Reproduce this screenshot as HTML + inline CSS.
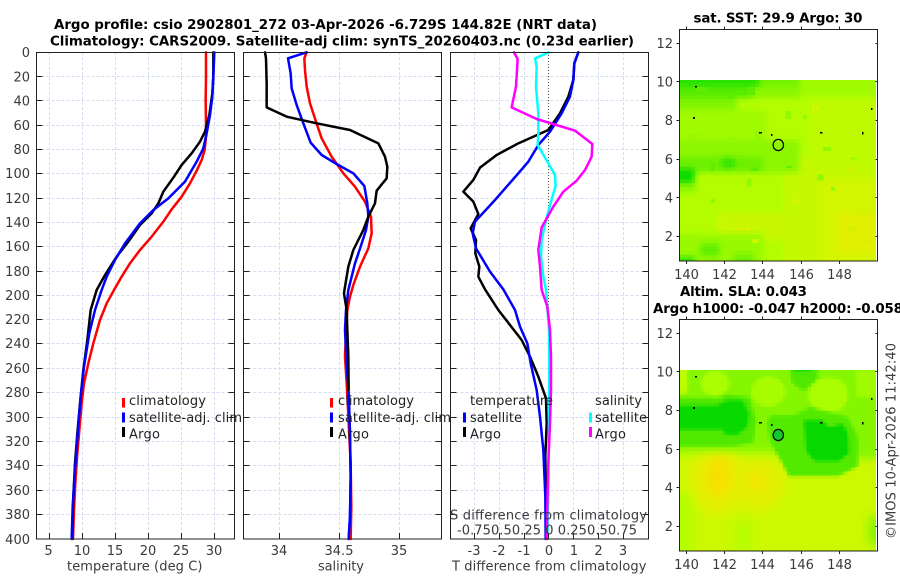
<!DOCTYPE html>
<html><head><meta charset="utf-8"><style>
html,body{margin:0;padding:0;background:#fff;width:900px;height:580px;overflow:hidden}
svg{display:block}
text{font-family:"DejaVu Sans","Liberation Sans",sans-serif;font-size:13px;fill:#3a3a3a}
.t{font-weight:bold;fill:#000;font-size:13.4px}
.yl{text-anchor:end}.xl{text-anchor:middle}
.l{fill:#222}
.c{fill:none;stroke-width:7.5;stroke-linejoin:round;stroke-linecap:round}
.g{fill:none;stroke:#d6dcf2;stroke-width:1;stroke-dasharray:3 2}
.k{fill:none;stroke:#222;stroke-width:1}
</style></head><body>
<svg width="900" height="580" viewBox="0 0 900 580" xmlns="http://www.w3.org/2000/svg">
<defs>
<path id="hg" class="g" d="M0 76.5H198M0 100.5H198M0 125.5H198M0 149.5H198M0 173.5H198M0 198.5H198M0 222.5H198M0 246.5H198M0 271.5H198M0 295.5H198M0 319.5H198M0 343.5H198M0 368.5H198M0 392.5H198M0 417.5H198M0 441.5H198M0 465.5H198M0 490.5H198M0 514.5H198"/>
<path id="ht" class="k" d="M0 76.5h6M0 100.5h6M0 125.5h6M0 149.5h6M0 173.5h6M0 198.5h6M0 222.5h6M0 246.5h6M0 271.5h6M0 295.5h6M0 319.5h6M0 343.5h6M0 368.5h6M0 392.5h6M0 417.5h6M0 441.5h6M0 465.5h6M0 490.5h6M0 514.5h6M198 76.5h-6M198 100.5h-6M198 125.5h-6M198 149.5h-6M198 173.5h-6M198 198.5h-6M198 222.5h-6M198 246.5h-6M198 271.5h-6M198 295.5h-6M198 319.5h-6M198 343.5h-6M198 368.5h-6M198 392.5h-6M198 417.5h-6M198 441.5h-6M198 465.5h-6M198 490.5h-6M198 514.5h-6"/>
<clipPath id="c1"><rect x="680" y="80" width="196" height="181"/></clipPath>
<clipPath id="c2"><rect x="680" y="370" width="196" height="181"/></clipPath>
<filter id="b1" filterUnits="userSpaceOnUse" x="640" y="60" width="260" height="520" color-interpolation-filters="sRGB"><feGaussianBlur stdDeviation="3"/></filter>
<filter id="b2" filterUnits="userSpaceOnUse" x="640" y="340" width="260" height="240" color-interpolation-filters="sRGB"><feGaussianBlur stdDeviation="1.2"/></filter>
<filter id="b3" filterUnits="userSpaceOnUse" x="640" y="340" width="260" height="240" color-interpolation-filters="sRGB"><feGaussianBlur stdDeviation="5"/></filter>
<filter id="b4" filterUnits="userSpaceOnUse" x="640" y="340" width="260" height="240" color-interpolation-filters="sRGB"><feGaussianBlur stdDeviation="4"/></filter>
<filter id="px" filterUnits="userSpaceOnUse" x="676" y="76" width="204" height="480" color-interpolation-filters="sRGB">
<feFlood x="676" y="76" width="2" height="2" flood-color="#000" result="f"/>
<feComposite in="f" in2="f" operator="over" x="676" y="76" width="4" height="4" result="c"/>
<feTile in="c" x="676" y="76" width="204" height="480" result="t"/>
<feComposite in="SourceGraphic" in2="t" operator="in" x="676" y="76" width="204" height="480" result="s"/>
<feMorphology in="s" operator="dilate" radius="1"/>
</filter>
</defs>

<!-- titles -->
<text class="t" x="54" y="29" textLength="543">Argo profile: csio 2902801_272 03-Apr-2026 -6.729S 144.82E (NRT data)</text>
<text class="t" x="50" y="45.7" textLength="584">Climatology: CARS2009. Satellite-adj clim: synTS_20260403.nc (0.23d earlier)</text>

<!-- grids -->
<use href="#hg" x="36.5"/><use href="#hg" x="243.5"/><use href="#hg" x="450.5"/>
<path class="g" d="M49.5 52V539M82.5 52V539M115.5 52V539M148.5 52V539M181.5 52V539M214.5 52V539M279.5 52V539M339.5 52V539M399.5 52V539M474.5 52V539M499.5 52V539M524.5 52V539M573.5 52V539M598.5 52V539M623.5 52V539"/>
<path d="M548.5 52V539" fill="none" stroke="#555533" stroke-width="1" stroke-dasharray="1 2"/>

<!-- curves -->
<g transform="scale(.33333)">
<polyline class="c" stroke="#f00" points="618,157 618,230 617,300 618,376 618,410 614,450 605,480 590,512 570,550 545,590 515,628 490,665 455,710 420,750 390,790 365,830 342,870 320,910 300,960 280,1030 265,1090 252,1150 245,1210 238,1290 232,1360 226,1450 222,1530 219,1617"/>
<polyline class="c" stroke="#000" points="640,157 640,230 637,280 628,345 615,395 600,425 575,460 545,495 522,530 490,575 475,610 455,640 420,675 385,725 350,770 315,825 290,870 272,930 262,1020 250,1110 240,1210 232,1300 225,1390 220,1490 216,1617"/>
<polyline class="c" stroke="#00f" points="643,157 640,230 637,290 630,345 620,400 610,445 590,485 555,545 505,595 460,630 420,670 375,730 345,780 320,830 305,870 285,930 268,1000 252,1100 242,1190 234,1290 225,1410 218,1520 215,1617"/>

<polyline class="c" stroke="#f00" points="920,157 913,175 915,210 920,260 930,310 948,365 965,415 995,470 1030,520 1065,560 1095,605 1113,650 1115,700 1105,745 1080,800 1060,855 1050,890 1042,930 1038,990 1035,1070 1040,1150 1046,1270 1052,1390 1054,1520 1052,1617"/>
<polyline class="c" stroke="#00f" points="920,157 864,175 872,220 875,265 890,315 910,370 932,428 965,465 1015,495 1060,520 1093,558 1102,610 1105,650 1098,690 1082,740 1065,790 1050,850 1045,870 1038,930 1035,990 1040,1090 1046,1180 1050,1300 1052,1430 1050,1550 1046,1617"/>
<polyline class="c" stroke="#000" points="795,157 798,175 800,250 800,322 860,350 950,370 1050,390 1135,430 1155,470 1162,500 1160,535 1130,572 1125,610 1105,650 1090,690 1060,750 1045,800 1035,860 1032,880 1040,930 1042,990 1045,1070 1046,1170"/>
<polyline class="c" stroke="#00f" points="1046,1180 1050,1300 1052,1430 1050,1550 1046,1617"/>

<g transform="translate(1320 0)">
<polyline class="c" stroke="#000" points="415,157 403,190 400,240 385,290 360,340 325,390 235,430 170,465 120,503 100,540 70,575 100,605 115,642 92,685 108,720 106,760 118,800 115,830 135,868 175,930 245,1020 270,1070 295,1130 318,1195 320,1270 316,1370 318,1490 322,1617"/>
<polyline class="c" stroke="#00f" points="415,157 403,190 400,240 390,290 365,340 330,395 295,435 265,485 235,520 165,600 105,665 98,700 108,745 150,815 190,868 225,930 240,980 262,1030 272,1090 290,1170 300,1250 310,1350 316,1490 317,1617"/>
<polyline class="c" stroke="#0ff" points="326,157 285,175 290,200 288,260 295,340 295,400 293,435 325,490 345,525 347,557 330,615 318,660 305,720 303,770 310,830 318,870 322,920 327,990 328,1120 327,1270 324,1520 322,1617"/>
<polyline class="c" stroke="#f0f" points="222,157 233,177 228,260 215,322 290,357 405,392 457,432 455,470 435,510 410,542 370,575 340,620 305,682 295,750 300,800 305,870 322,920 330,990 333,1070 333,1170 330,1270 325,1390 322,1520 320,1617"/>
</g>
</g>

<!-- frames and ticks -->
<rect class="k" x="36.5" y="52.5" width="198" height="486.5"/>
<rect class="k" x="243.5" y="52.5" width="198" height="486.5"/>
<rect class="k" x="450.5" y="52.5" width="198" height="486.5"/>
<use href="#ht" x="36.5"/><use href="#ht" x="243.5"/><use href="#ht" x="450.5"/>
<path class="k" d="M49.5 539v-6M82.5 539v-6M115.5 539v-6M148.5 539v-6M181.5 539v-6M214.5 539v-6M279.5 539v-6M339.5 539v-6M399.5 539v-6M474.5 539v-6M499.5 539v-6M524.5 539v-6M548.5 539v-6M573.5 539v-6M598.5 539v-6M623.5 539v-6"/>

<!-- y labels -->
<text class="yl" x="30" y="57">0</text><text class="yl" x="30" y="81.5">20</text><text class="yl" x="30" y="105.5">40</text><text class="yl" x="30" y="130">60</text><text class="yl" x="30" y="154">80</text><text class="yl" x="30" y="178">100</text><text class="yl" x="30" y="203">120</text><text class="yl" x="30" y="227">140</text><text class="yl" x="30" y="251">160</text><text class="yl" x="30" y="276">180</text><text class="yl" x="30" y="300">200</text><text class="yl" x="30" y="324">220</text><text class="yl" x="30" y="348">240</text><text class="yl" x="30" y="373">260</text><text class="yl" x="30" y="397">280</text><text class="yl" x="30" y="422">300</text><text class="yl" x="30" y="446">320</text><text class="yl" x="30" y="470">340</text><text class="yl" x="30" y="495">360</text><text class="yl" x="30" y="519">380</text><text class="yl" x="30" y="544">400</text>

<!-- x labels -->
<text class="xl" x="48.5" y="555">5</text><text class="xl" x="82" y="555">10</text><text class="xl" x="115" y="555">15</text><text class="xl" x="148" y="555">20</text><text class="xl" x="181" y="555">25</text><text class="xl" x="214" y="555">30</text>
<text class="xl" x="279" y="555">34</text><text class="xl" x="339" y="555">34.5</text><text class="xl" x="399" y="555">35</text>
<text class="xl" x="474" y="555">-3</text><text class="xl" x="499" y="555">-2</text><text class="xl" x="524" y="555">-1</text><text class="xl" x="549" y="555">0</text><text class="xl" x="574" y="555">1</text><text class="xl" x="598.5" y="555">2</text><text class="xl" x="623" y="555">3</text>
<text x="67" y="570.5" textLength="135.5">temperature (deg C)</text>
<text x="318" y="570.5" textLength="46">salinity</text>
<text x="452" y="570.5" textLength="194.5">T difference from climatology</text>
<text x="450" y="519.5" textLength="197">S difference from climatology</text>
<text x="457" y="534.5" textLength="180">-0.750.50.25 0  0.250.50.75</text>

<!-- legends -->
<g stroke-width="3" fill="none">
<path stroke="#f00" d="M123.5 398v9.5"/><path stroke="#00f" d="M123.5 412.5v10"/><path stroke="#000" d="M123.5 427v10"/>
<path stroke="#f00" d="M331.5 398v9.5"/><path stroke="#00f" d="M331.5 412.5v10"/><path stroke="#000" d="M331.5 427v10"/>
<path stroke="#00f" d="M464.5 412.5v10"/><path stroke="#000" d="M464.5 427v10"/>
<path stroke="#0ff" d="M590.5 412.5v10"/><path stroke="#f0f" d="M590.5 427v10"/>
</g>
<text class="l" x="129" y="405" textLength="77">climatology</text>
<text class="l" x="129" y="422" textLength="113">satellite-adj. clim</text>
<text class="l" x="129" y="438.5" textLength="31">Argo</text>
<text class="l" x="338" y="405" textLength="76">climatology</text>
<text class="l" x="338" y="422" textLength="113">satellite-adj. clim</text>
<text class="l" x="338" y="438.5" textLength="31">Argo</text>
<text class="l" x="470" y="405" textLength="83">temperature</text>
<text class="l" x="470" y="422" textLength="52">satellite</text>
<text class="l" x="470" y="438.5" textLength="31">Argo</text>
<text class="l" x="595" y="405" textLength="47">salinity</text>
<text class="l" x="595" y="422" textLength="52">satellite</text>
<text class="l" x="595" y="438.5" textLength="31">Argo</text>

<!-- map 1 -->
<text class="t" x="693.5" y="22.5" textLength="169">sat. SST: 29.9 Argo: 30</text>
<g clip-path="url(#c1)"><g filter="url(#px)">
<g filter="url(#b1)"><g transform="translate(650 0) scale(.33333)">
<rect x="40" y="190" width="690" height="640" fill="#b4fd00"/>
<rect x="400" y="470" width="330" height="360" fill="#c4f900"/>
<rect x="480" y="300" width="250" height="200" fill="#bffb00"/>
<rect x="510" y="540" width="220" height="290" fill="#d2f500"/>
<rect x="560" y="640" width="170" height="120" fill="#e0f000"/>
<rect x="200" y="640" width="200" height="80" fill="#c8f800"/>
<rect x="40" y="190" width="290" height="72" fill="#28e400"/>
<rect x="329" y="190" width="121" height="72" fill="#74f200"/>
<rect x="450" y="190" width="280" height="100" fill="#a0fb00"/>
<rect x="40" y="262" width="270" height="34" fill="#58ec00"/>
<rect x="309" y="262" width="141" height="34" fill="#8cf700"/>
<rect x="40" y="296" width="220" height="34" fill="#80f400"/>
<rect x="40" y="330" width="310" height="90" fill="#a0fa00"/>
<rect x="40" y="420" width="410" height="100" fill="#8cf600"/>
<rect x="40" y="470" width="300" height="45" fill="#6cef00"/>
<rect x="40" y="505" width="95" height="45" fill="#0cdc00"/>
<rect x="215" y="472" width="40" height="33" fill="#30e400"/>
<rect x="40" y="550" width="100" height="30" fill="#8cf600"/>
<rect x="40" y="700" width="300" height="130" fill="#98f900"/>
<rect x="150" y="730" width="60" height="40" fill="#60ee00"/>
<rect x="250" y="760" width="60" height="70" fill="#70f000"/>
<rect x="40" y="770" width="95" height="60" fill="#28e400"/>
</g></g>
<g transform="translate(650 0) scale(.33333)" shape-rendering="crispEdges">
<g fill="#90f800"><rect x="404" y="336" width="18" height="18"/><rect x="520" y="440" width="22" height="12"/><rect x="290" y="540" width="18" height="18"/><rect x="460" y="345" width="12" height="12"/><rect x="500" y="520" width="24" height="24"/><rect x="540" y="560" width="12" height="12"/><rect x="230" y="410" width="24" height="12"/><rect x="120" y="400" width="24" height="12"/><rect x="310" y="390" width="24" height="24"/><rect x="180" y="600" width="12" height="12"/><rect x="600" y="470" width="12" height="12"/></g>
<g fill="#60ee00"><rect x="290" y="260" width="24" height="24"/><rect x="230" y="285" width="24" height="12"/><rect x="180" y="490" width="12" height="24"/><rect x="300" y="500" width="24" height="12"/><rect x="405" y="495" width="24" height="12"/><rect x="140" y="262" width="24" height="12"/></g>
<g fill="#d4f200"><rect x="590" y="680" width="24" height="12"/><rect x="650" y="715" width="12" height="12"/><rect x="430" y="600" width="12" height="12"/><rect x="260" y="680" width="36" height="12"/><rect x="310" y="715" width="12" height="12"/><rect x="490" y="320" width="12" height="12"/><rect x="620" y="630" width="36" height="12"/><rect x="590" y="500" width="12" height="12"/></g>
</g>
</g></g>
<rect x="876" y="80" width="1" height="181" fill="#fff"/>
<rect class="k" x="679.5" y="29.5" width="198" height="231.5"/>
<path class="k" d="M679.5 43.5h-3M679.5 81.5h-3M679.5 120.5h-3M679.5 159.5h-3M679.5 197.5h-3M679.5 236.5h-3M877.5 43.5h-2M877.5 81.5h-2M877.5 120.5h-2M877.5 159.5h-2M877.5 197.5h-2M877.5 236.5h-2M686.5 29.5v-3M724.5 29.5v-3M762.5 29.5v-3M801.5 29.5v-3M839.5 29.5v-3M686.5 261v3M724.5 261v3M762.5 261v3M801.5 261v3M839.5 261v3"/>
<g fill="#000"><rect x="695" y="86" width="2" height="1.5"/><rect x="693" y="117" width="2" height="2"/><rect x="759" y="132" width="3" height="1.5"/><rect x="771" y="134" width="1.5" height="2"/><rect x="820" y="132" width="2.5" height="1.5"/><rect x="862" y="132" width="1.5" height="2.5"/><rect x="871" y="108" width="1.5" height="2"/></g>
<ellipse cx="778.3" cy="145" rx="5.2" ry="5.6" fill="none" stroke="#000" stroke-width="1.2"/>
<text class="yl" x="673" y="48">12</text><text class="yl" x="673" y="86.5">10</text><text class="yl" x="673" y="125">8</text><text class="yl" x="673" y="164">6</text><text class="yl" x="673" y="202.5">4</text><text class="yl" x="673" y="241">2</text>
<text class="xl" x="686.5" y="279">140</text><text class="xl" x="724.5" y="279">142</text><text class="xl" x="762.5" y="279">144</text><text class="xl" x="801.5" y="279">146</text><text class="xl" x="839.5" y="279">148</text>

<!-- map 2 -->
<text class="t" x="680" y="296" textLength="127">Altim. SLA: 0.043</text>
<text class="t" x="653" y="313" textLength="250">Argo h1000: -0.047 h2000: -0.058</text>
<g clip-path="url(#c2)"><g filter="url(#px)">
<g filter="url(#b3)"><g transform="translate(650 280) scale(.33333)">
<rect x="40" y="220" width="690" height="640" fill="#b8fc00"/>
<rect x="40" y="530" width="690" height="320" fill="#ccf800"/>
<rect x="40" y="640" width="90" height="210" fill="#b4fd00"/>
<rect x="250" y="720" width="55" height="130" fill="#b8fc00"/>
<rect x="655" y="710" width="70" height="85" fill="#84f500"/>
<ellipse cx="205" cy="600" rx="90" ry="105" fill="#e2f000"/>
<ellipse cx="325" cy="610" rx="78" ry="80" fill="#e2f000"/>
<ellipse cx="205" cy="590" rx="42" ry="60" fill="#f6e000"/>
<ellipse cx="320" cy="605" rx="32" ry="32" fill="#f0e600"/>
</g></g>
<g filter="url(#b4)"><g transform="translate(650 280) scale(.33333)">
<path d="M40 190H730V535H600L540 565L450 560L390 515H40Z" fill="#86f600"/>
</g></g>
<g filter="url(#b2)"><g transform="translate(650 280) scale(.33333)">
<rect x="40" y="220" width="72" height="120" fill="#bcfc00"/>
<ellipse cx="195" cy="310" rx="42" ry="36" fill="#aafd00"/>
<ellipse cx="355" cy="335" rx="50" ry="44" fill="#a8fc00"/>
<ellipse cx="535" cy="345" rx="58" ry="52" fill="#aafd00"/>
<path d="M620 270h110v80h-110z" fill="#a0fb00"/>
<path d="M40 352H209L229 342L299 350L320 420L310 490L250 500H40Z" fill="#50e800"/>
<path d="M360 405h70l50-25 115 30 30 60v90l-60 30h-150l-25-50-30-50-10-60z" fill="#54ea00"/>
<path d="M410 220h100l-8 80-42 35-35-25z" fill="#50e800"/>
<path d="M428 220h56v56h-56z" fill="#10dc00"/>
<path d="M40 375H199L229 360H279L299 400L294 440L264 465H224L219 450H40Z" fill="#08da00"/>
<path d="M460 420h60l15 20 45-10 15 30 3 60-30 25h-75l-25-30z" fill="#06d800"/>
</g></g>
</g></g>
<rect x="876" y="370" width="1" height="181" fill="#fff"/>
<rect class="k" x="679.5" y="319.5" width="198" height="231.5"/>
<path class="k" d="M679.5 333.5h-3M679.5 371.5h-3M679.5 410.5h-3M679.5 449.5h-3M679.5 487.5h-3M679.5 526.5h-3M877.5 333.5h-2M877.5 371.5h-2M877.5 410.5h-2M877.5 449.5h-2M877.5 487.5h-2M877.5 526.5h-2M686.5 319.5v-3M724.5 319.5v-3M762.5 319.5v-3M801.5 319.5v-3M839.5 319.5v-3M686.5 551v3M724.5 551v3M762.5 551v3M801.5 551v3M839.5 551v3"/>
<g fill="#000"><rect x="695" y="376" width="2" height="1.5"/><rect x="693" y="407" width="2" height="2"/><rect x="759" y="422" width="3" height="1.5"/><rect x="771" y="424" width="1.5" height="2"/><rect x="820" y="422" width="2.5" height="1.5"/><rect x="862" y="422" width="1.5" height="2.5"/><rect x="871" y="398" width="1.5" height="2"/></g>
<ellipse cx="778.3" cy="435" rx="5.2" ry="5.6" fill="#10c830" stroke="#000" stroke-width="1.2"/>
<text class="yl" x="673" y="338">12</text><text class="yl" x="673" y="376.5">10</text><text class="yl" x="673" y="415">8</text><text class="yl" x="673" y="454">6</text><text class="yl" x="673" y="492.5">4</text><text class="yl" x="673" y="531">2</text>
<text class="xl" x="686.5" y="569">140</text><text class="xl" x="724.5" y="569">142</text><text class="xl" x="762.5" y="569">144</text><text class="xl" x="801.5" y="569">146</text><text class="xl" x="839.5" y="569">148</text>

<text transform="translate(895.5 539) rotate(-90)" x="0" y="0" textLength="196">©IMOS 10-Apr-2026 11:42:40</text>
</svg>
</body></html>
